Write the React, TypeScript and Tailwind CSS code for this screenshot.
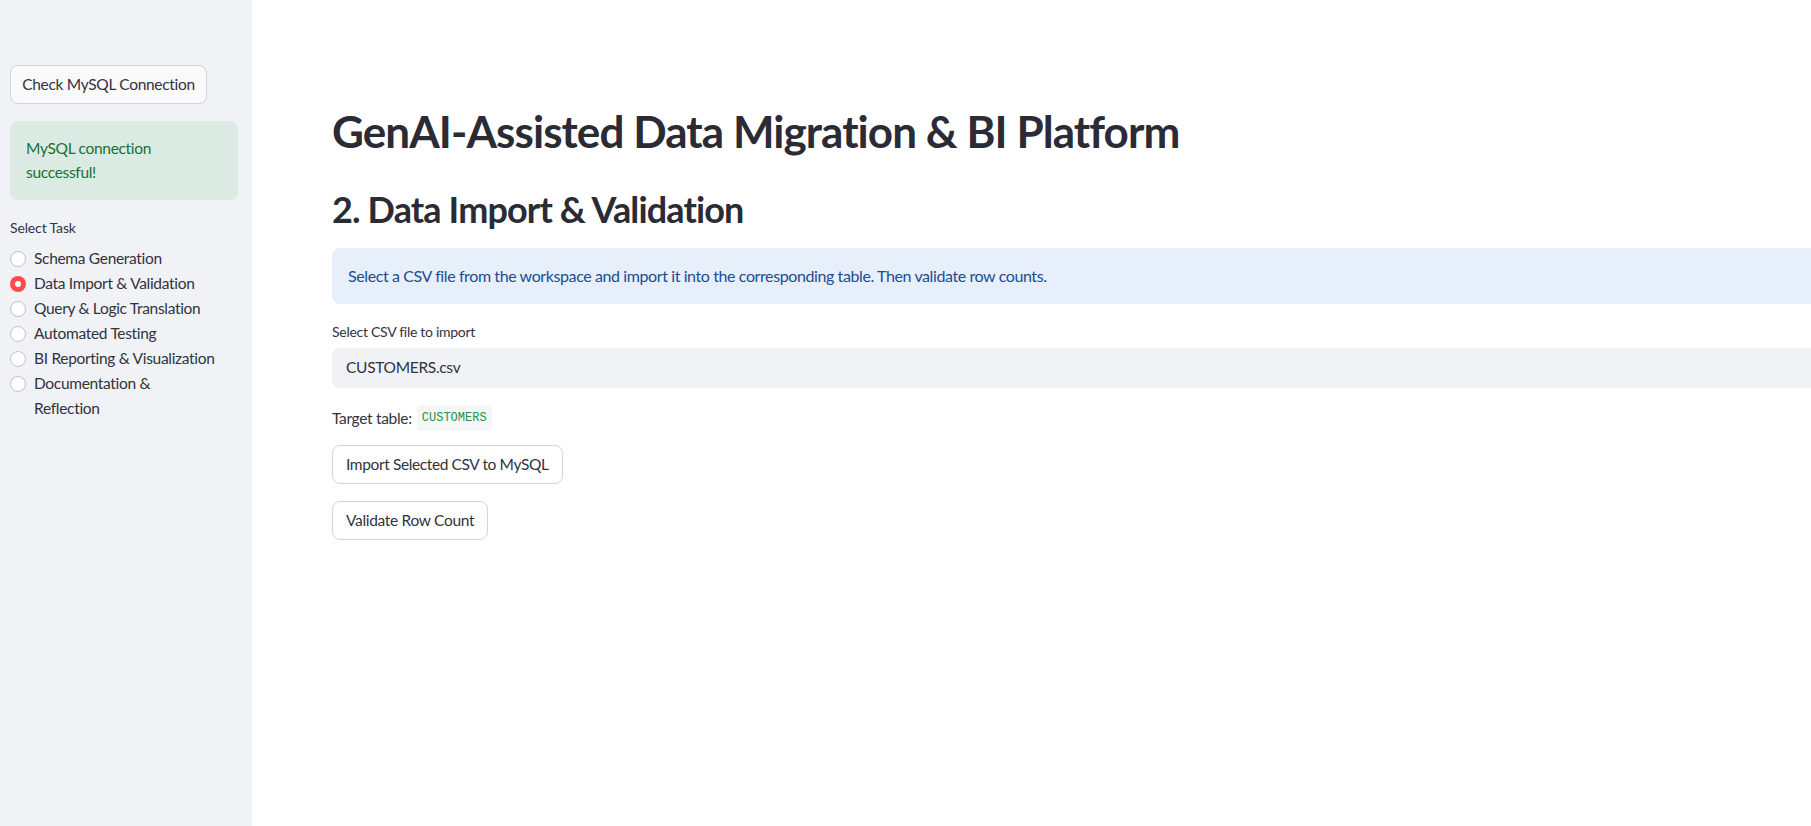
import React from "react";

const tasks = [
  "Schema Generation",
  "Data Import & Validation",
  "Query & Logic Translation",
  "Automated Testing",
  "BI Reporting & Visualization",
];

function Radio({ checked }: { checked?: boolean }) {
  if (checked) {
    return (
      <span className="mt-[5px] flex h-[16px] w-[16px] shrink-0 items-center justify-center rounded-full bg-[#ff4b4b]">
        <span className="h-[6px] w-[6px] rounded-full bg-white" />
      </span>
    );
  }
  return (
    <span className="mt-[5px] h-[16px] w-[16px] shrink-0 rounded-full border-[1.5px] border-[#bfc2c8] bg-white" />
  );
}

export default function App() {
  return (
    <div
      className="flex h-[826px] w-full overflow-hidden bg-white text-[#31333f]"
      style={{ fontFamily: "Lato, 'Noto Sans', sans-serif" }}
    >
      <aside className="flex w-[252px] shrink-0 flex-col bg-[#f0f2f6] pl-[10px] pr-[14px] pt-[65px] text-[15.5px] tracking-[-0.02em]">
        <button className="h-[39px] w-[197px] rounded-[8px] border border-[#d3d5db] bg-[#fafafb] text-[15.5px] text-[#31333f]">
          Check MySQL Connection
        </button>
        <div className="mt-[17px] h-[79px] rounded-[8px] bg-[#dbeae3] px-[16px] pt-[15px] leading-[24px] text-[#177233]">
          MySQL connection
          <br />
          successful!
        </div>
        <div className="mt-[19px] text-[14px] leading-[18px] tracking-[-0.01em]">Select Task</div>
        <div className="mt-[9px] flex flex-col">
          {tasks.map((t, i) => (
            <div key={t} className="flex gap-[8px] leading-[25px]">
              <Radio checked={i === 1} />
              <span>{t}</span>
            </div>
          ))}
          <div className="flex gap-[8px] leading-[25px]">
            <Radio />
            <span>
              Documentation &amp;
              <br />
              Reflection
            </span>
          </div>
        </div>
      </aside>
      <main className="min-w-0 flex-1 overflow-hidden pl-[80px]">
        <div className="w-[1502px]">
          <h1 className="pt-[105px] text-[44px] font-bold leading-[52px] tracking-[-0.021em] text-[#2a2b35]">
            GenAI-Assisted Data Migration &amp; BI Platform
          </h1>
          <h2 className="mt-[30px] text-[36px] font-bold leading-[44px] tracking-[-0.024em] text-[#2a2b35]">
            2. Data Import &amp; Validation
          </h2>
          <div className="mt-[17px] flex h-[56px] items-center rounded-[8px] bg-[#e7effb] px-[16px] text-[16px] tracking-[-0.025em] text-[#1c4c95]">
            Select a CSV file from the workspace and import it into the corresponding table. Then validate row counts.
          </div>
          <div className="mt-[18px] text-[14px] leading-[20px] tracking-[-0.02em]">Select CSV file to import</div>
          <div className="mt-[6px] flex h-[40px] items-center justify-between rounded-[8px] bg-[#f0f2f6] pl-[14px] pr-[12px] text-[15.5px] tracking-[-0.02em]">
            <span>CUSTOMERS.csv</span>
            <svg width="12" height="12" viewBox="0 0 24 24" fill="none" stroke="#31333f" strokeWidth="2.5">
              <path d="M6 9l6 6 6-6" />
            </svg>
          </div>
          <div className="mt-[17px] flex items-center gap-[5px] text-[15.5px] leading-[24px] tracking-[-0.02em]">
            <span>Target table:</span>
            <code
              className="rounded-[4px] bg-[#f5f6f8] px-[5px] py-[1px] text-[12px] tracking-normal text-[#23934a]"
              style={{ fontFamily: "'Liberation Mono', 'DejaVu Sans Mono', monospace" }}
            >
              CUSTOMERS
            </code>
          </div>
          <button className="mt-[14px] block h-[39px] rounded-[8px] border border-[#d3d5db] bg-white px-[13px] text-[15.5px] tracking-[-0.025em] text-[#31333f]">
            Import Selected CSV to MySQL
          </button>
          <button className="mt-[17px] block h-[39px] rounded-[8px] border border-[#d3d5db] bg-white px-[13px] text-[15.5px] tracking-[-0.02em] text-[#31333f]">
            Validate Row Count
          </button>
        </div>
      </main>
    </div>
  );
}
